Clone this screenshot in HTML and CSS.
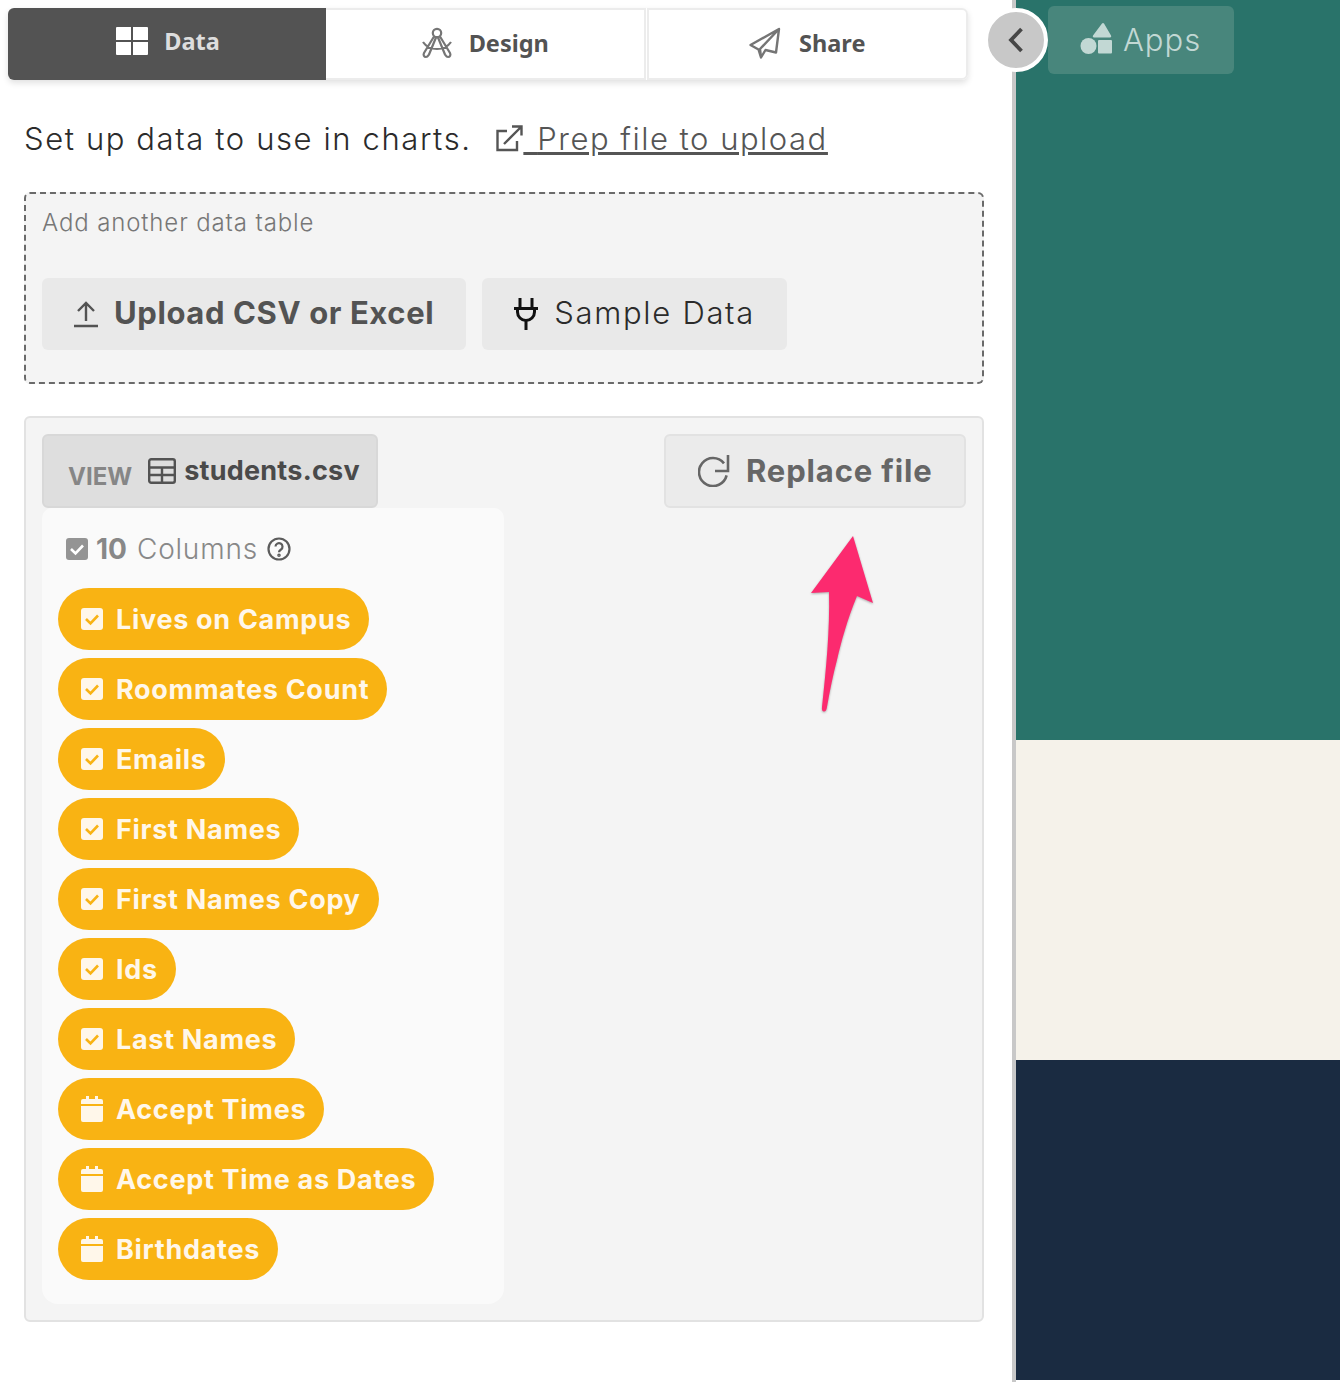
FILE: index.html
```html
<!DOCTYPE html>
<html lang="en">
<head>
    <meta charset="utf-8" />
    <title>Data</title>
    <link rel="stylesheet" href="styles.css">
</head>
<body>
<div class="pagina">
    <div class="panel">
        <div class="tabs">
            <div class="tab activa">
                <svg width="32" height="28" viewBox="0 0 32 28"><path fill="#fff" d="M0 1a1 1 0 0 1 1-1h14v13H0zM17 0h14a1 1 0 0 1 1 1v12H17zM0 15h15v13H1a1 1 0 0 1-1-1zM17 15h15v12a1 1 0 0 1-1 1H17z"/></svg>
                <span>Data</span>
            </div>
            <div class="tab">
                <svg width="32" height="32" viewBox="0 0 32 32" fill="none" stroke="#757575" stroke-width="2.200" stroke-linejoin="round"><circle cx="16" cy="6" r="4.200"/><path d="M13 9.500 3 26c-1 2 0 4 2 4 1.500 0 2-1 3-2.500L15 10.500M19 9.500 29 26c1 2 0 4-2 4-1.500 0-2-1-3-2.500L17 10.500M2 15c3 4.500 8 7 14 7s11-2.500 14-7"/></svg>
                <span>Design</span>
            </div>
            <div class="tab">
                <svg width="34" height="32" viewBox="0 0 34 32" fill="none" stroke="#757575" stroke-width="2.400" stroke-linejoin="round"><path d="M30 2 1.500 18 9.500 22.500 12 30.500 16.500 23 27 25.500ZM30 2 11 22 12 30.500"/></svg>
                <span>Share</span>
            </div>
        </div>

        <p class="intro">
            <span>Set up data to use in charts.</span>
            <a class="enlace" href="#">
                <svg width="28" height="28" viewBox="0 0 28 28" fill="none" stroke="#555" stroke-width="2.400"><path d="M11 7H1.500v19H21v-9M8 20 25 3M16 2.500h9.500v9"/></svg><u><span class="hueco"> </span>Prep file to upload</u>
            </a>
        </p>

        <div class="caja-subir">
            <div class="etiqueta">Add another data table</div>
            <div class="botones">
                <div class="boton fuerte">
                    <svg width="26" height="28" viewBox="0 0 26 28" fill="none" stroke="#535353" stroke-width="2.400"><path d="M12 21V3M4 11l8-8 8 8M0 26h24"/></svg>
                    <span>Upload CSV or Excel</span>
                </div>
                <div class="boton">
                    <svg width="26" height="34" viewBox="0 0 26 34" fill="none" stroke="#111" stroke-width="3"><path d="M6 1v10M18 1v10M0 11.500h24M3.500 11v4a8.500 8.500 0 0 0 17 0v-4M12 24v9"/></svg>
                    <span>Sample Data</span>
                </div>
            </div>
        </div>

        <div class="caja-datos">
            <div class="fila-archivo">
                <div class="vista">
                    <span class="vista-txt">VIEW</span>
                    <svg width="28" height="26" viewBox="0 0 28 26" fill="none" stroke="#535353" stroke-width="2.400"><rect x="1.200" y="1.200" width="25.600" height="23.600" rx="2"/><path d="M1 9.500h26M1 17h26M14 9.500V25"/></svg>
                    <b>students.csv</b>
                </div>
                <div class="reemplazar">
                    <svg width="32" height="32" viewBox="0 0 32 32" fill="none" stroke="#666" stroke-width="2.600"><path d="M26 8.400A14 14 0 1 0 28.600 20.400M30 0v16H17"/></svg>
                    <span>Replace file</span>
                </div>
            </div>
            <div class="columnas">
                <div class="columnas-tit">
                    <svg width="22" height="22" viewBox="0 0 22 22"><rect width="22" height="22" rx="3" fill="#949494"/><path d="M5 11l4.500 4.500L17 7.500" fill="none" stroke="#fff" stroke-width="2.600"/></svg>
                    <b>10</b>
                    <span>Columns</span>
                    <svg width="24" height="24" viewBox="0 0 24 24" fill="none" stroke="#5c5c5c" stroke-width="2.200"><circle cx="12" cy="12" r="10.500"/><path d="M8.500 9.500a3.500 3.500 0 1 1 5.500 3c-1.400.9-2 1.500-2 2.800"/><circle cx="12" cy="18.300" r=".7"/></svg>
                </div>
                <div class="pildora"><svg class="ico" viewBox="0 0 22 22"><use href="#marcado"/></svg>Lives on Campus</div>
                <div class="pildora"><svg class="ico" viewBox="0 0 22 22"><use href="#marcado"/></svg>Roommates Count</div>
                <div class="pildora"><svg class="ico" viewBox="0 0 22 22"><use href="#marcado"/></svg>Emails</div>
                <div class="pildora"><svg class="ico" viewBox="0 0 22 22"><use href="#marcado"/></svg>First Names</div>
                <div class="pildora"><svg class="ico" viewBox="0 0 22 22"><use href="#marcado"/></svg>First Names Copy</div>
                <div class="pildora"><svg class="ico" viewBox="0 0 22 22"><use href="#marcado"/></svg>Ids</div>
                <div class="pildora"><svg class="ico" viewBox="0 0 22 22"><use href="#marcado"/></svg>Last Names</div>
                <div class="pildora"><svg class="ico" viewBox="0 0 22 26"><use href="#fecha"/></svg>Accept Times</div>
                <div class="pildora"><svg class="ico" viewBox="0 0 22 26"><use href="#fecha"/></svg>Accept Time as Dates</div>
                <div class="pildora"><svg class="ico" viewBox="0 0 22 26"><use href="#fecha"/></svg>Birthdates</div>
            </div>
        </div>

        <svg class="flecha" width="66" height="178" viewBox="0 0 66 178"><path fill="#fc2a6f" d="M44 1 2 58 20 57C21 95 17 135 13 172 12.600 175 13.500 176.500 15 176.500S17.600 175 18 172C21 155 24 140 28 125 32 108 38 85 48 61L64 68Z"/></svg>
        <div class="plegar"><svg width="16" height="26" viewBox="0 0 16 26" fill="none" stroke="#464646" stroke-width="3.800"><path d="M13.500 2 3 13l10.500 11"/></svg></div>
    </div>

    <div class="lateral">
        <div class="verde">
            <div class="apps">
                <svg width="32" height="32" viewBox="0 0 32 32" fill="#c2d8d4"><path d="M23 1.500c.5-.8 1.500-.8 2 0L32 13.500c.5 1 0 2-1 2H15c-1 0-1.500-1-1-2z" transform="translate(-1)"/><circle cx="8.500" cy="24" r="8"/><rect x="18" y="18" width="14" height="13.500" rx="1"/></svg>
                <span>Apps</span>
            </div>
        </div>
        <div class="crema"></div>
        <div class="azul"></div>
    </div>
</div>

<svg class="defs" width="0" height="0">
    <symbol id="marcado" viewBox="0 0 22 22"><rect width="22" height="22" rx="3" fill="#fff7ea"/><path d="M5 11l4.500 4.500L17 7.500" fill="none" stroke="#f9b313" stroke-width="2.600"/></symbol>
    <symbol id="fecha" viewBox="0 0 22 26"><path fill="#fff7ea" d="M5 0h3v3h6V0h3v3h3a2 2 0 0 1 2 2v3H0V5a2 2 0 0 1 2-2h3zM0 10h22v14a2 2 0 0 1-2 2H2a2 2 0 0 1-2-2z"/></symbol>
</svg>
</body>
</html>
```

FILE: styles.css
```css
*{
    margin:0;
    padding:0;
    box-sizing:border-box;
}
body{
    background:#fff;
    font-family:"Inter","Liberation Sans",sans-serif;
    color:#333;
}
.pagina{
    display:flex;
    width:1340px;
    height:1382px;
    overflow:hidden;
}
.panel{
    position:relative;
    width:1016px;
    flex:none;
    padding:8px 28px 0 24px;
    border-right:4px solid #c8c8c8;
}

/* tabs */
.tabs{
    display:flex;
    width:960px;
    height:72px;
    margin-left:-16px;
    border-radius:6px;
    box-shadow:0 3px 6px rgba(0,0,0,.12);
}
.tab{
    flex:1;
    display:flex;
    align-items:center;
    justify-content:center;
    gap:16px;
    padding-bottom:2px;
    font-family:"Noto Sans","Liberation Sans",sans-serif;
    font-size:23.500px;
    font-weight:700;
    color:#535353;
    background:#fff;
    border:2px solid #ececec;
    border-left:none;
}
.tab:last-child{
    margin-left:1px;
    border-left:2px solid #ececec;
    border-radius:0 6px 6px 0;
}
.tab.activa{
    flex:none;
    width:318px;
    padding:0 0 6px 2px;
    background:#535353;
    color:#ddd;
    border:none;
    border-radius:6px 0 0 6px;
}

.intro{
    display:flex;
    align-items:center;
    gap:24px;
    height:34px;
    margin-top:41px;
    font-size:31px;
    font-weight:300;
    letter-spacing:1.600px;
    color:#2b2b2b;
    white-space:nowrap;
}
.enlace{
    display:flex;
    align-items:center;
    letter-spacing:1.500px;
    color:#555;
    white-space:pre;
}
.hueco{
    letter-spacing:5px;
}

/* caja de subir */
.caja-subir{
    width:960px;
    height:192px;
    margin-top:37px;
    padding:14px 16px;
    background:#f4f4f4;
    border:2px dashed #6a6a6a;
    border-radius:6px;
}
.etiqueta{
    font-size:24px;
    font-weight:300;
    letter-spacing:.870px;
    color:#777;
    height:30px;
}
.botones{
    display:flex;
    gap:16px;
    margin-top:40px;
}
.boton{
    display:flex;
    align-items:center;
    gap:14px;
    height:72px;
    padding:0 32px 3px;
    background:#e9e9e9;
    border-radius:6px;
    font-size:31px;
    font-weight:300;
    letter-spacing:1.700px;
    color:#2b2b2b;
}
.boton svg{
    margin-top:3px;
}
.boton.fuerte{
    font-weight:700;
    letter-spacing:.600px;
    color:#535353;
}

/* caja de datos */
.caja-datos{
    width:960px;
    height:906px;
    margin-top:32px;
    padding:16px;
    background:#f4f4f4;
    border:2px solid #e2e2e2;
    border-radius:6px;
}
.fila-archivo{
    display:flex;
    justify-content:space-between;
    height:74px;
}
.vista{
    display:flex;
    align-items:center;
    width:336px;
    padding-left:24px;
    background:#dedede;
    border:2px solid #d8d8d8;
    border-radius:6px;
}
.vista-txt{
    margin:10px 16px 0 0;
    font-size:24px;
    font-weight:700;
    color:#868686;
}
.vista b{
    margin:-1px 0 0 8px;
    font-size:27px;
    font-weight:700;
    letter-spacing:.250px;
    color:#4a4a4a;
}
.reemplazar{
    display:flex;
    align-items:center;
    gap:16px;
    width:302px;
    padding:0 0 1px 32px;
    background:#ebebeb;
    border:2px solid #e2e2e2;
    border-radius:6px;
    font-size:31px;
    font-weight:700;
    letter-spacing:.850px;
    color:#666;
}
.columnas{
    width:462px;
    height:796px;
    padding:0 16px;
    background:#fafafa;
    border-radius:10px 10px 16px 16px;
}
.columnas-tit{
    display:flex;
    align-items:center;
    gap:8px;
    height:80px;
    padding:2px 0 0 8px;
    font-size:28px;
    font-weight:300;
    color:#888;
}
.columnas-tit b{
    font-weight:700;
}
.columnas-tit span{
    margin-left:2px;
    letter-spacing:.800px;
}
.columnas-tit svg:last-child{
    margin-left:1px;
}
.pildora{
    display:flex;
    align-items:center;
    gap:13px;
    width:fit-content;
    height:62px;
    margin-bottom:8px;
    padding:0 18px 0 23px;
    background:#f9b313;
    border-radius:31px;
    font-size:27px;
    font-weight:700;
    letter-spacing:.700px;
    color:#fff7ea;
    white-space:nowrap;
}
.ico{
    width:22px;
    height:26px;
    flex:none;
}

/* encima del contenido */
.flecha{
    position:absolute;
    left:809px;
    top:535px;
    filter:drop-shadow(0 1px 1px rgba(0,0,0,.3));
}
.plegar{
    position:absolute;
    left:984px;
    top:8px;
    width:64px;
    height:64px;
    display:flex;
    align-items:center;
    justify-content:center;
    background:#c8c8c8;
    border:4px solid #fff;
    border-radius:50%;
}

/* lateral */
.lateral{
    flex:1;
}
.verde{
    height:740px;
    padding:6px 0 0 32px;
    background:#29736a;
}
.crema{
    height:320px;
    background:#f5f2ea;
}
.azul{
    height:320px;
    background:#1a2b41;
}
.apps{
    display:flex;
    align-items:center;
    gap:11px;
    width:186px;
    height:68px;
    padding:0 0 2px 32px;
    background:#48867c;
    border-radius:6px;
    font-size:31px;
    font-weight:300;
    letter-spacing:1px;
    color:#c2d8d4;
}
.apps svg{
    margin-bottom:3px;
}
.defs{
    position:absolute;
}
```
